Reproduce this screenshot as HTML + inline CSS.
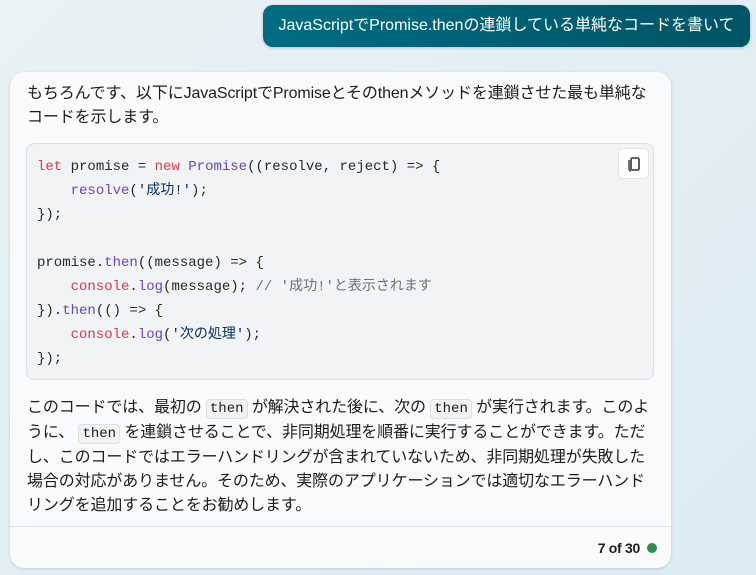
<!DOCTYPE html>
<html><head><meta charset="utf-8"><style>
*{margin:0;padding:0;box-sizing:border-box}
body{width:756px;height:575px;overflow:hidden;background:linear-gradient(135deg,#eaf1f4,#dcecf4);font-family:"Liberation Sans","Noto Sans CJK JP",sans-serif;color:#1d1d1d;position:relative}
.user{position:absolute;left:263px;top:5px;width:487px;height:42px;border-radius:10px;background:linear-gradient(90deg,#006d82,#005465);color:#fff;font-size:16px;line-height:42px;text-align:center;white-space:nowrap;letter-spacing:0;box-shadow:0 1px 3px rgba(0,0,0,.2)}
.card{position:absolute;left:10px;top:72px;width:661px;height:496px;border-radius:14px;background:#f8fafb;box-shadow:0 1px 3px rgba(0,0,0,.15)}
.p{position:absolute;left:17px;font-size:16px;line-height:24px;white-space:nowrap;letter-spacing:-0.13px}
.code{position:absolute;left:16px;top:71px;width:628px;height:237px;background:#f1f3f5;border:1px solid #dcdfe3;border-radius:8px}
pre{position:absolute;left:10px;top:11px;font-family:"Liberation Mono","Noto Sans CJK JP",monospace;font-size:14px;line-height:24px;color:#24292e}
.k{color:#d73a49}.f{color:#6f42c1}.s{color:#032f62}.c{color:#6a737d}
.copy{position:absolute;left:591px;top:4px;width:31px;height:31px;background:#fff;border:1px solid #e2e4e7;border-radius:5px}
code{font-family:"Liberation Mono",monospace;font-size:14px;background:#f0f2f4;border:1px solid #dcdfe3;border-radius:4px;padding:1px 3px;letter-spacing:0}
.div{position:absolute;left:0;right:0;top:454px;border-top:1px solid #dde1e4}
.ft{position:absolute;right:31px;top:466px;font-size:14px;font-weight:bold;line-height:20px;letter-spacing:-0.3px}
.dot{position:absolute;left:637px;top:471px;width:10px;height:10px;border-radius:50%;background:#2e8b4a}
</style></head><body>
<div class="user">JavaScriptでPromise.thenの連鎖している単純なコードを書いて</div>
<div class="card">
<div class="p" style="top:10px">もちろんです、以下にJavaScriptでPromiseとそのthenメソッドを連鎖させた最も単純な<br>コードを示します。</div>
<div class="code">
<pre><span class="k">let</span> promise = <span class="k">new</span> <span class="f">Promise</span>((resolve, reject) => {
    <span class="f">resolve</span>(<span class="s">'成功!'</span>);
});

promise.<span class="f">then</span>((message) => {
    <span class="k">console</span>.<span class="f">log</span>(message); <span class="c">// '成功!'と表示されます</span>
}).<span class="f">then</span>(() => {
    <span class="k">console</span>.<span class="f">log</span>(<span class="s">'次の処理'</span>);
});</pre>
<div class="copy"><svg width="31" height="31" viewBox="0 0 31 31"><rect x="12" y="9" width="8" height="12" rx="1.5" fill="none" stroke="#333" stroke-width="1.6"/><path d="M10 11v9a2 2 0 0 0 2 2" fill="none" stroke="#333" stroke-width="1.4"/></svg></div>
</div>
<div class="p" style="top:324px">このコードでは、最初の <code>then</code> が解決された後に、次の <code>then</code> が実行されます。このよ<br>うに、 <code>then</code> を連鎖させることで、非同期処理を順番に実行することができます。ただ<br>し、このコードではエラーハンドリングが含まれていないため、非同期処理が失敗した<br>場合の対応がありません。そのため、実際のアプリケーションでは適切なエラーハンド<br>リングを追加することをお勧めします。</div>
<div class="div"></div>
<div class="ft">7 of 30</div>
<div class="dot"></div>
</div>
</body></html>
